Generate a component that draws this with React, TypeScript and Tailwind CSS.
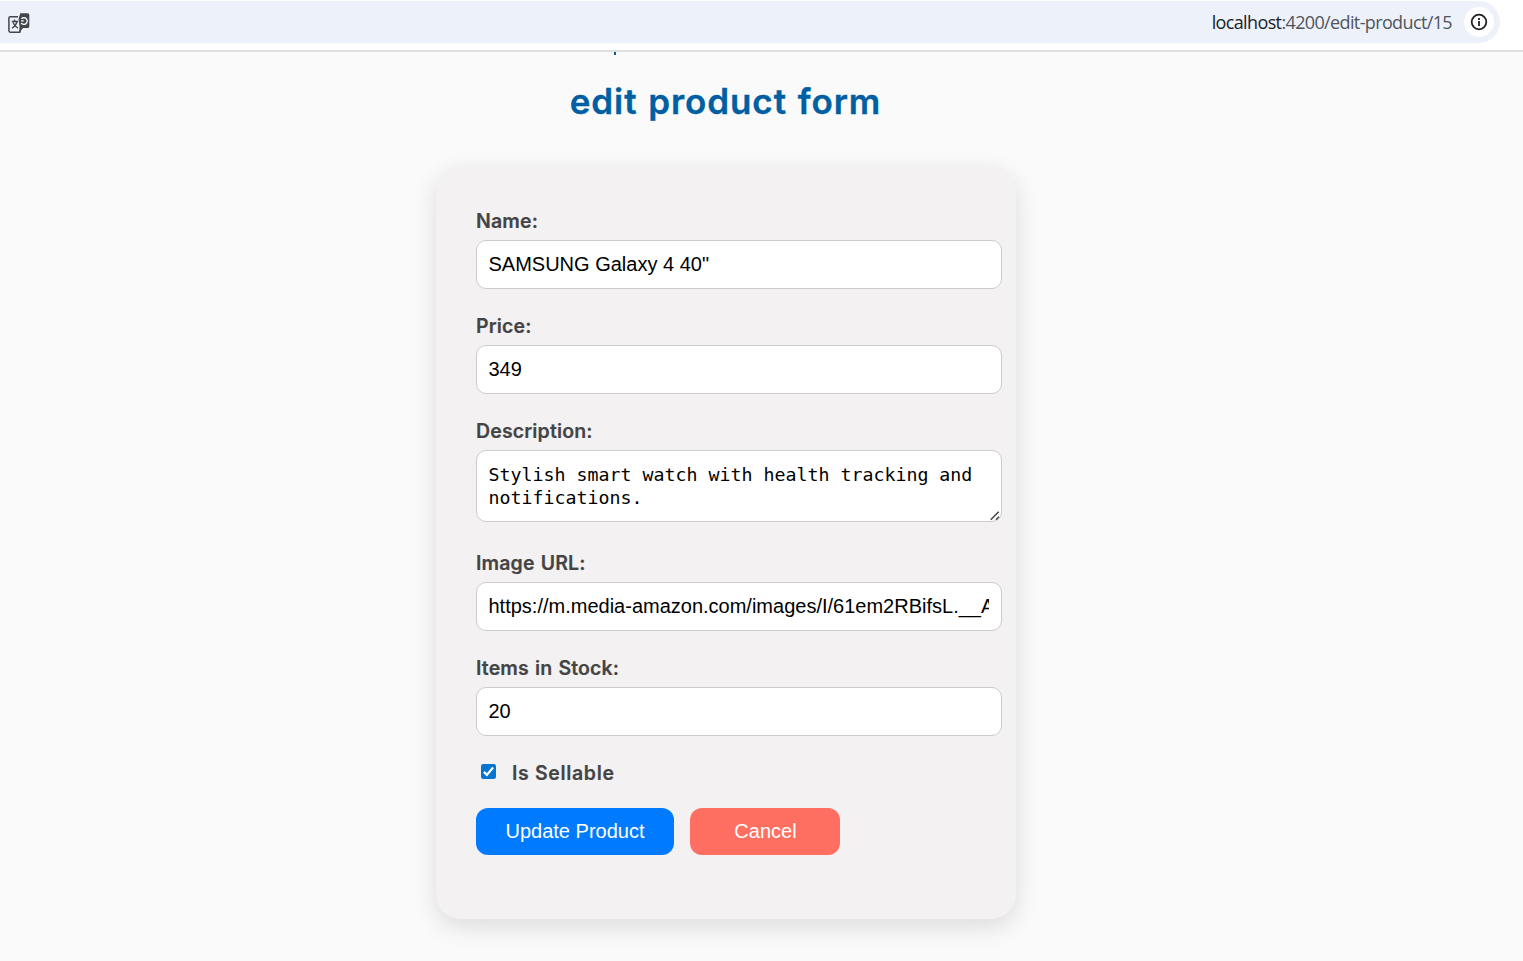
import { ReactNode } from "react";

const box =
  "block w-[526px] rounded-[10px] border border-[#ccc] bg-white text-black outline-none";
const inputBox = `${box} h-[49px] pl-[11.5px] pr-3 font-['Liberation_Sans',Arial,sans-serif] text-[20px]`;

function Field({ label, children }: { label: ReactNode; children: ReactNode }) {
  return (
    <label className="block">
      <span className="block h-[30px] text-[19.5px] leading-[22px] font-semibold tracking-[0.15px] text-[#444] [-webkit-text-stroke:0.2px_#444] [word-spacing:1px]">
        {label}
      </span>
      {children}
    </label>
  );
}

function TranslateIcon() {
  return (
    <svg className="mt-px" width="22" height="22" viewBox="0 0 22 22" fill="none">
      <path d="M10 4.8H2.3a1.4 1.4 0 0 0-1.4 1.4v12.6a1.4 1.4 0 0 0 1.4 1.4h9.5l1.2-4" stroke="#444749" strokeWidth="1.5" />
      <path d="M3.8 9.5h6.4M6.2 7.6l1 1.9M9 9.8c-.8 2.8-2.5 5-5 6.5M5 10.5c1 2.4 2.7 4.4 5 5.7" stroke="#444749" strokeWidth="1.3" />
      <path d="M12.3 1.2h7.3a1.7 1.7 0 0 1 1.7 1.7v11.5a1.7 1.7 0 0 1-1.7 1.7h-4.4l-4.2 4 .6-4.9-1-8.5Z" fill="#444749" />
      <path d="M13.2 11a3.3 3.3 0 1 0 .2-4.1M13.1 8.9h2.7" stroke="#f4f6fa" strokeWidth="1.4" />
    </svg>
  );
}

export default function App() {
  return (
    <div className="flex h-[961px] w-[1523px] flex-col overflow-hidden bg-[#fafafa] font-[Inter,sans-serif]">
      <header className="h-[52px] shrink-0 border-b-2 border-[#dfdfdf] bg-white pt-px">
        <div className="flex h-[42px] w-[1500px] items-center justify-between rounded-r-full bg-[#ecf1fa] pr-[6px] pl-[8px]">
          <TranslateIcon />
          <div className="flex items-center gap-[12px]">
            <span className="font-['Open_Sans','Noto_Sans',sans-serif] text-[18px] tracking-[-0.63px] text-[#51555a]">
              <span className="text-[#202124]">localhost</span>:4200/edit-product/15
            </span>
            <span className="flex size-[30px] items-center justify-center rounded-full bg-white">
              <svg width="18" height="18" viewBox="0 0 18 18" fill="none" stroke="#202124" strokeWidth="1.8">
                <circle cx="9" cy="9" r="7.3" />
                <path d="M9 8v5M9 5v1.9" />
              </svg>
            </span>
          </div>
        </div>
      </header>
      <main className="flex flex-col pl-[436px]">
        <div className="ml-[178px] h-[3px] w-[2px] bg-[#0b5c94]" />
        <h1 className="mt-[24px] w-[579px] text-center text-[35px] leading-[44px] font-semibold tracking-[0.9px] whitespace-nowrap text-[#005fa3] [-webkit-text-stroke:0.35px_#005fa3] [word-spacing:1.2px]">
          edit product form
        </h1>
        <form className="mt-[43px] flex h-[753px] w-[580px] flex-col rounded-[25px] bg-[#f3f1f2] px-10 pt-[44px] shadow-[0_8px_24px_rgba(0,0,0,0.12)]">
          <div className="flex flex-col gap-[26px]">
            <Field label="Name:">
              <input className={inputBox} defaultValue={'SAMSUNG Galaxy 4 40"'} />
            </Field>
            <Field label="Price:">
              <input className={inputBox} defaultValue="349" />
            </Field>
            <Field label="Description:">
              <textarea
                className={`${box} mb-[4px] h-[72px] resize-none overflow-hidden pl-[11.5px] pr-3 py-[12px] font-['DejaVu_Sans_Mono',monospace] text-[18.27px] leading-[23px]`}
                defaultValue="Stylish smart watch with health tracking and notifications."
              />
              <svg className="pointer-events-none -mt-[15px] mb-[4px] ml-[514px]" width="11" height="11" viewBox="0 0 11 11" fill="none" stroke="#444" strokeWidth="1.5">
                <path d="M.7 8.7 8.7.7M6 8.7l3-3" />
              </svg>
            </Field>
            <Field label="Image URL:">
              <input
                className={inputBox}
                defaultValue="https://m.media-amazon.com/images/I/61em2RBifsL.__AC_SX300"
              />
            </Field>
            <Field label="Items in Stock:">
              <input className={inputBox} defaultValue="20" />
            </Field>
          </div>
          <label className="mt-[25px] flex h-[24px] items-center pl-[5px] text-[19.5px] font-semibold tracking-[0.65px] text-[#444] [-webkit-text-stroke:0.2px_#444]">
            <input type="checkbox" defaultChecked className="peer sr-only" />
            <svg className="mr-[16px] mb-[3px]" width="15" height="15" viewBox="0 0 15 15" fill="none">
              <rect width="15" height="15" rx="2.3" fill="#0675d1" />
              <path d="M2.9 7.9 5.9 10.9 12.1 3.5" stroke="white" strokeWidth="2.2" />
            </svg>
            <span className="pt-px">Is Sellable</span>
          </label>
          <div className="mt-[23px] flex gap-4 font-['Liberation_Sans',Arial,sans-serif] text-[20px] text-white">
            <button type="button" className="h-[47px] w-[198px] rounded-[12px] bg-[#007bff] pb-[2px]">
              Update Product
            </button>
            <button type="button" className="h-[47px] w-[150px] rounded-[12px] bg-[#ff6f61] pb-[2px] pl-px">
              Cancel
            </button>
          </div>
        </form>
      </main>
    </div>
  );
}
